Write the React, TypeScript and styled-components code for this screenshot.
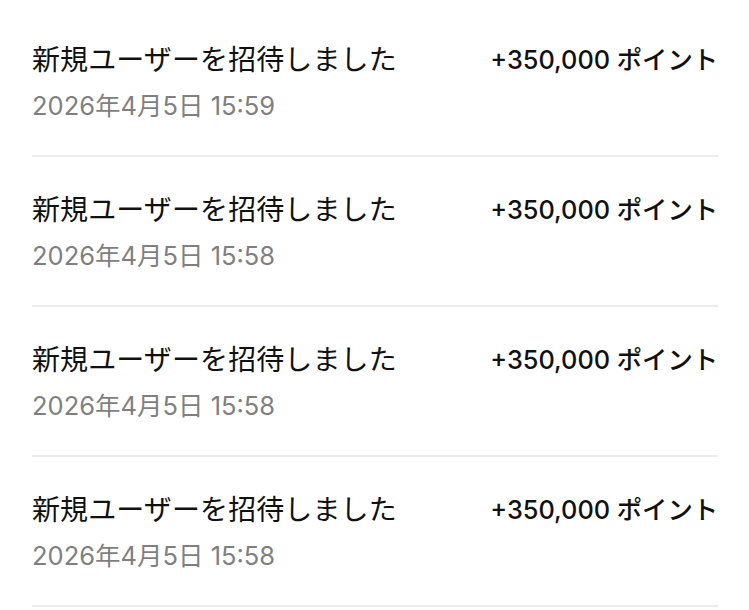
import React from "react";
import styled, { createGlobalStyle } from "styled-components";

const Global = createGlobalStyle`
  html, body { margin: 0; padding: 0; background: #ffffff; }
  body { font-family: Inter, "Noto Sans CJK JP", sans-serif; -webkit-font-smoothing: antialiased; }
`;

const List = styled.div`
  display: flex;
  flex-direction: column;
  padding: 7px 31px 0 32px;
`;

const Row = styled.div`
  display: flex;
  justify-content: space-between;
  align-items: flex-start;
  height: 148px;
  box-sizing: content-box;
  border-bottom: 2px solid #ececec;
`;

const Left = styled.div`
  display: flex;
  flex-direction: column;
  padding-top: 35px;
  gap: 12px;
`;

const Title = styled.div`
  font-size: 28px;
  line-height: 36px;
  color: #111111;
  font-weight: 400;
  letter-spacing: 0.1px;
`;

const DateText = styled.div`
  font-size: 25.5px;
  line-height: 32px;
  color: #7f7f7f;
  font-weight: 400;
`;

const Amount = styled.div`
  padding-top: 35px;
  font-size: 25.3px;
  line-height: 36px;
  font-weight: 500;
  color: #111111;
  white-space: nowrap;
`;

const items = [
  { date: "2026年4月5日 15:59" },
  { date: "2026年4月5日 15:58" },
  { date: "2026年4月5日 15:58" },
  { date: "2026年4月5日 15:58" },
];

export default function App() {
  return (
    <>
      <Global />
      <List>
        {items.map((it, i) => (
          <Row key={i}>
            <Left>
              <Title>新規ユーザーを招待しました</Title>
              <DateText>{it.date}</DateText>
            </Left>
            <Amount>+350,000 ポイント</Amount>
          </Row>
        ))}
      </List>
    </>
  );
}
